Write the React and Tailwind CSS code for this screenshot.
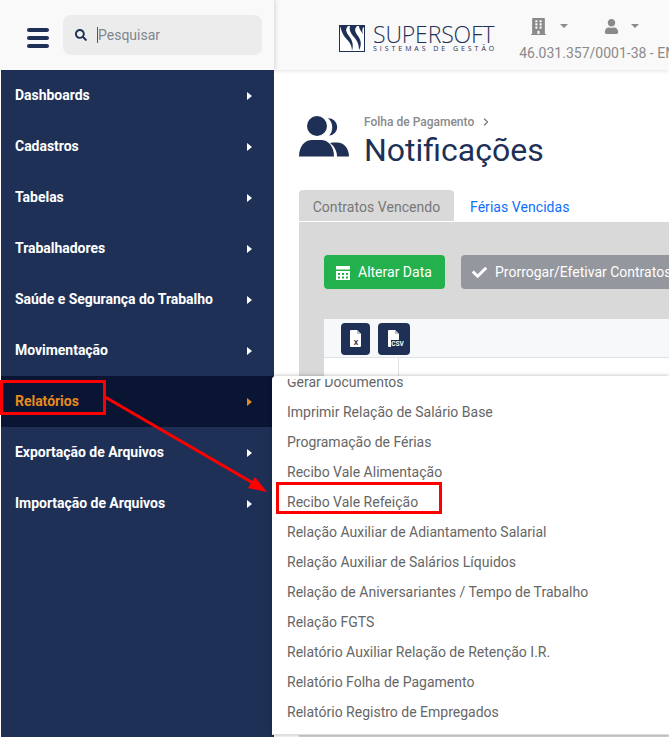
import { ChevronRight } from 'lucide-react';
import { FaBuilding, FaCheck, FaSearch, FaUser } from 'react-icons/fa';

const menuItems = [
  'Dashboards',
  'Cadastros',
  'Tabelas',
  'Trabalhadores',
  'Saúde e Segurança do Trabalho',
  'Movimentação',
  'Relatórios',
  'Exportação de Arquivos',
  'Importação de Arquivos',
];

const subItems = [
  'Imprimir Relação de Salário Base',
  'Programação de Férias',
  'Recibo Vale Alimentação',
  'Recibo Vale Refeição',
  'Relação Auxiliar de Adiantamento Salarial',
  'Relação Auxiliar de Salários Líquidos',
  'Relação de Aniversariantes / Tempo de Trabalho',
  'Relação FGTS',
  'Relatório Auxiliar Relação de Retenção I.R.',
  'Relatório Folha de Pagamento',
  'Relatório Registro de Empregados',
];

function Caret({ className }) {
  return <span className={`inline-block border-y-[4px] border-l-[5px] border-y-transparent ${className}`} />;
}

function DownCaret() {
  return <span className="inline-block border-x-[4px] border-t-[4px] border-x-transparent border-t-[#8a8a8a]" />;
}

function Logo() {
  return (
    <div className="flex items-center gap-[8px] shrink-0 pt-[6px]">
      <svg width="26" height="27" viewBox="0 0 26 27">
        <rect x="0.5" y="0.5" width="25" height="26" fill="#fff" stroke="#1e3056" />
        <path d="M1 1h8c-3 3-2 6 1 10s5 8 3 15C13 18 8 15 5 11 3 8 2 4 1 1z" fill="#1e3056" />
        <path d="M11 1h7c-3 3-2 6 1 10s4 9 1 14c0-7-3-11-6-14-3-4-4-7-3-10z" fill="#1e3056" />
        <path d="M20 1h5v1c-2 1-2 4-1 7-2-3-4-5-4-8z" fill="#1e3056" />
      </svg>
      <div className="flex flex-col">
        <span className="text-[23px] leading-[20px] font-light text-[#1e3056] tracking-[-0.15px] whitespace-nowrap font-['Open_Sans',sans-serif]">SUPERSOFT</span>
        <span className="mt-px text-[7px] leading-[8px] text-[#1e3056] tracking-[2.95px] whitespace-nowrap font-['Open_Sans',sans-serif]">SISTEMAS DE GESTÃO</span>
      </div>
    </div>
  );
}

function Header() {
  return (
    <header className="h-[70px] bg-[#f9f9f9] shadow-[0_1px_4px_rgba(0,0,0,0.12)] flex shrink-0 pl-[65px] overflow-hidden">
      <Logo />
      <div className="ml-[22px] pt-[17px] shrink-0">
        <div className="flex items-center h-[18px] text-[#8a8a8a] pl-[11px]">
          <FaBuilding size={17} />
          <span className="ml-[13px] flex"><DownCaret /></span>
          <span className="ml-[36px]"><FaUser size={15} /></span>
          <span className="ml-[12px] flex"><DownCaret /></span>
        </div>
        <div className="mt-[9px] text-[14px] leading-[18px] text-[#8a8a8a] whitespace-nowrap">46.031.357/0001-38 - EMPRESA</div>
      </div>
    </header>
  );
}

function UsersIcon() {
  return (
    <svg width="50" height="42" viewBox="0 0 50 42" className="shrink-0 text-[#1e3056]" fill="currentColor">
      <path d="M29 3.2A8.6 8.6 0 1 1 30 20.6 12 12 0 0 0 29 3.2z" />
      <path d="M38 41.5h12c0-8-5-14-12-14h-4c-1 0-2 .2-3 .5 4 3 7 7.500 7 13.500z" />
      <circle cx="18" cy="11" r="10" />
      <path d="M0 41.500C0 31 6 25 13 25h9c7 0 13 6 13 16.500z" />
    </svg>
  );
}

function TableCalendarIcon() {
  return (
    <svg width="14" height="14" viewBox="0 0 14 14" fill="currentColor">
      <path d="M0 0h14v3.500H0z" />
      <path fillRule="evenodd" d="M0 5h14v9H0zM2 7v2h2V7zm4 0v2h2V7zm4 0v2h2V7zm-8 3.500v2h2v-2zm4 0v2h2v-2zm4 0v2h2v-2z" />
    </svg>
  );
}

function ExportButton({ label, width, fileX }) {
  return (
    <button className={`${width} h-[32px] rounded-[4px] bg-[#1e3056] flex items-center justify-center`}>
      <svg width="20" height="20" viewBox="0 0 20 20">
        <path d={`M${fileX} 1h7l4 4v12a1 1 0 0 1-1 1h-9a1 1 0 0 1-1-1V2a1 1 0 0 1 1-1z`} fill="#fff" />
        <path d={`M${fileX + 7} 1v4h4z`} fill="#b8c0d0" />
        {label === 'X' ? (
          <text x="10" y="16" textAnchor="middle" fontSize="7" fontWeight="700" fill="#1e3056" fontFamily="Roboto, sans-serif">X</text>
        ) : (
          <>
            <rect x="7" y="11" width="13" height="7" fill="#1e3056" />
            <text x="13.500" y="17" textAnchor="middle" fontSize="6.500" fontWeight="700" fill="#fff" fontFamily="Roboto, sans-serif">CSV</text>
          </>
        )}
      </svg>
    </button>
  );
}

function Main() {
  return (
    <main className="flex-1 min-w-0 flex flex-col overflow-hidden bg-white">
      <Header />
      <div className="pl-[25px] pt-[45px]">
        <div className="flex items-start">
          <UsersIcon />
          <div className="ml-[15px]">
            <div className="flex items-center text-[12px] leading-[14px] font-medium text-[#8a8a8a]">
              Folha de Pagamento
              <ChevronRight size={12} strokeWidth={2.5} className="ml-[6px] text-[#777]" />
            </div>
            <h1 className="mt-[2px] text-[32px] leading-[38px] text-[#1e3056]">Notificações</h1>
          </div>
        </div>

        <div className="mt-[21px] flex items-end h-[31px] text-[14px] tracking-[0.05px]">
          <div className="w-[155px] h-[31px] pt-[3px] bg-[#d9d9d9] rounded-t-[4px] flex items-center justify-center text-[#777]">Contratos Vencendo</div>
          <div className="ml-[16px] h-[31px] pt-[3px] flex items-center text-[#0d6efd]">Férias Vencidas</div>
        </div>

        <div className="mt-px bg-[#d9d9d9] h-[600px] pl-[25px] pt-[33px]">
          <div className="flex gap-[16px]">
            <button className="h-[34px] w-[121px] shrink-0 pt-px rounded-[4px] bg-[#23b14d] text-white text-[14px] flex items-center pl-[12px] gap-[8px]">
              <TableCalendarIcon />
              Alterar Data
            </button>
            <button className="h-[34px] w-[240px] shrink-0 pt-px rounded-[4px] bg-[#94979d] text-white text-[14px] flex items-center pl-[11px] gap-[8px] whitespace-nowrap">
              <FaCheck size={15} />
              Prorrogar/Efetivar Contratos
            </button>
          </div>
          <div className="mt-[30px] bg-white">
            <div className="h-[39px] pt-px bg-[#f6f8fa] border-b border-[#dee2e6] flex items-center pl-[17px] gap-[8px]">
              <ExportButton label="X" width="w-[29px]" fileX={4} />
              <ExportButton label="CSV" width="w-[32px]" fileX={4} />
            </div>
            <div className="h-[40px] w-[75px] border-r border-[#dee2e6]" />
          </div>
        </div>
      </div>
    </main>
  );
}

function Sidebar() {
  return (
    <aside className="w-[274px] shrink-0 flex flex-col z-10">
      <div className="h-[70px] bg-[#f9f9f9] shadow-[1px_0_4px_rgba(0,0,0,0.15)] flex items-center pl-[27px] pr-[12px]">
        <div className="mt-[5px] flex flex-col gap-[4px] w-[22px]">
          <span className="h-[4px] rounded-full bg-[#1e3056]" />
          <span className="h-[4px] rounded-full bg-[#1e3056]" />
          <span className="h-[4px] rounded-full bg-[#1e3056]" />
        </div>
        <div className="ml-[14px] flex-1 h-[40px] rounded-[8px] bg-[#ececec] flex items-center pl-[12px]">
          <FaSearch size={12} className="text-[#1e3056]" />
          <span className="ml-[10px] w-px h-[16px] bg-[#555]" />
          <span className="text-[14px] text-[#80868e]">Pesquisar</span>
        </div>
      </div>
      <nav className="flex-1 bg-[#1e3056] ml-px">
        {menuItems.map((item) => {
          const active = item === 'Relatórios';
          return (
            <div
              key={item}
              className={`h-[51px] flex items-center justify-between pl-[14px] pr-[22px] text-[14px] font-bold tracking-[-0.03px] ${active ? 'bg-[#0a1433] text-[#e38a1e]' : 'text-white'}`}
            >
              {item}
              <Caret className={active ? 'border-l-[#e38a1e]' : 'border-l-white'} />
            </div>
          );
        })}
      </nav>
    </aside>
  );
}

function Flyout() {
  return (
    <div className="absolute z-20 left-[272px] top-[376px] w-[397px] h-[359px] bg-white rounded-tl-[4px] border-t-[3px] border-t-white border-b border-b-[#ddd] shadow-[0_0_4px_rgba(0,0,0,0.3)] overflow-hidden text-[14px] text-[#666] pl-[15px]">
      <div className="h-[30px] leading-[30px] -mt-[12px]">Gerar Documentos</div>
      {subItems.map((item) => (
        <div key={item} className="h-[30px] leading-[30px] whitespace-nowrap">{item}</div>
      ))}
    </div>
  );
}

function Annotations() {
  return (
    <>
      <div className="absolute z-30 left-0 top-[380px] w-[106px] h-[35px] border-[3px] border-[#ff0000]" />
      <div className="absolute z-30 left-[276px] top-[482px] w-[166px] h-[32px] border-[3px] border-[#ff0000]" />
      <svg className="absolute z-30 left-0 top-0 pointer-events-none" width="669" height="737">
        <line x1="105" y1="397" x2="258" y2="486" stroke="#ff0000" strokeWidth="3" />
        <polygon points="267,492 248,488 255,477" fill="#ff0000" />
      </svg>
    </>
  );
}

export default function App() {
  return (
    <div className="relative w-[669px] h-[737px] overflow-hidden flex bg-white font-['Roboto',sans-serif]">
      <Sidebar />
      <Main />
      <Flyout />
      <Annotations />
    </div>
  );
}
